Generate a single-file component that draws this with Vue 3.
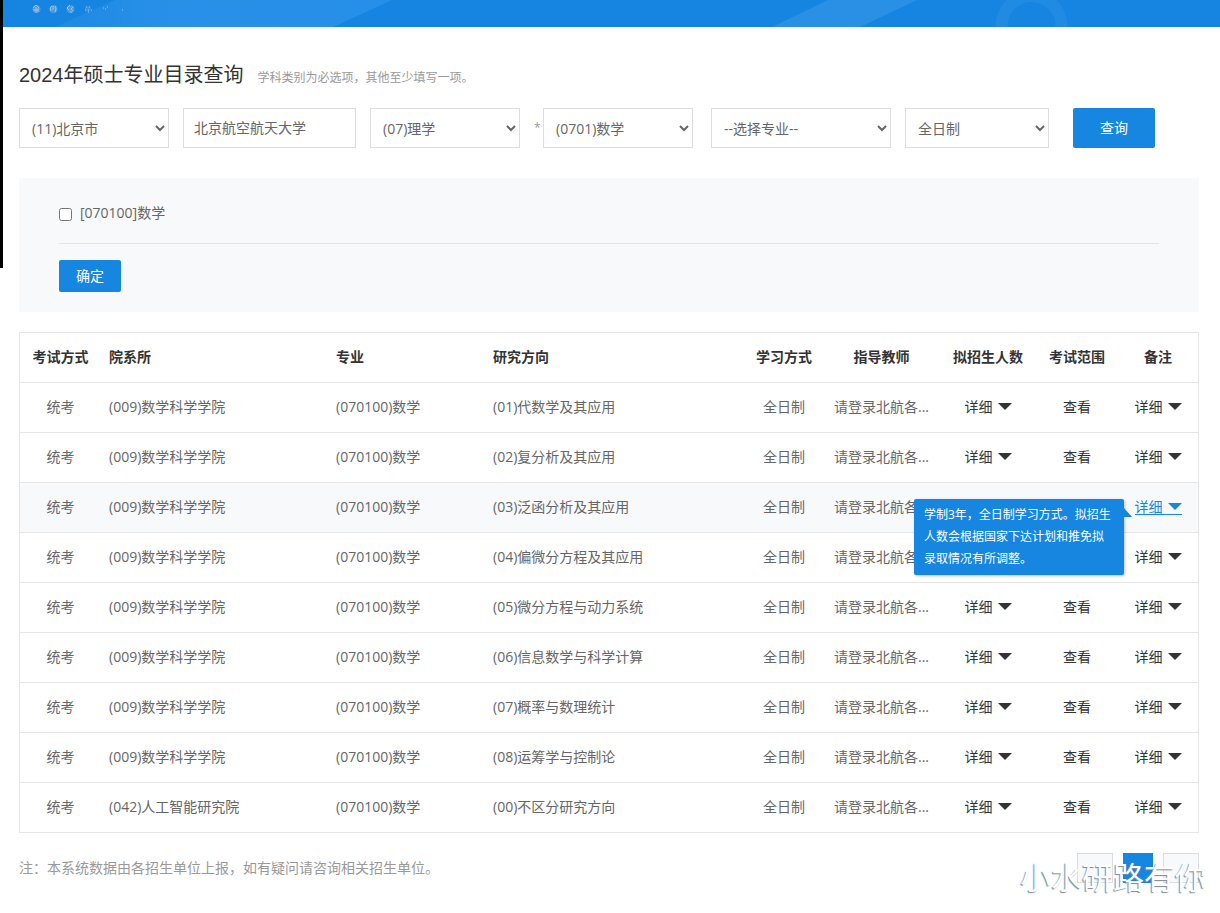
<script setup>
import { ref } from 'vue'

const province = ref('(11)北京市')
const school = ref('北京航空航天大学')
const category = ref('(07)理学')
const subject = ref('(0701)数学')
const major = ref('--选择专业--')
const mode = ref('全日制')
const picked = ref(false)

const math = '(009)数学科学学院'
const rows = [
  { dept: math, direction: '(01)代数学及其应用' },
  { dept: math, direction: '(02)复分析及其应用' },
  { dept: math, direction: '(03)泛函分析及其应用', active: true },
  { dept: math, direction: '(04)偏微分方程及其应用', covered: true },
  { dept: math, direction: '(05)微分方程与动力系统' },
  { dept: math, direction: '(06)信息数学与科学计算' },
  { dept: math, direction: '(07)概率与数理统计' },
  { dept: math, direction: '(08)运筹学与控制论' },
  { dept: '(042)人工智能研究院', direction: '(00)不区分研究方向' },
]
</script>

<template>
  <div class="page">
    <div class="edge"></div>
    <header class="banner">
      <svg class="shapes" width="1220" height="27" viewBox="0 0 1220 27" aria-hidden="true">
        <defs>
          <linearGradient id="ray" x1="0" x2="1">
            <stop offset="0" stop-color="#1d8ae4" />
            <stop offset="0.35" stop-color="#2990e8" />
            <stop offset="1" stop-color="#268fe7" />
          </linearGradient>
        </defs>
        <path d="M115 0H392L333 27H55Z" fill="url(#ray)" />
        <path d="M828 0H917L860 27H772Z" fill="#2990e6" />
        <circle cx="1031.500" cy="26" r="30" fill="none" stroke="#218be4" stroke-width="12" />
        <g fill="#4a9be6">
          <circle cx="36.500" cy="9" r="4" />
          <circle cx="53.500" cy="9" r="4" />
          <circle cx="70.500" cy="9" r="4" />
          <circle cx="88" cy="9" r="3" opacity="0.6" />
        </g>
        <g fill="none" stroke="#a9bfd6" stroke-width="1">
          <path d="M33 8l3-3 3 3M34 9v2M36 7v6M38 8v4M35 10h3" />
          <path d="M52 6l-2 2 1 3M55 6l1 3-1 3M53 6v4" />
          <path d="M70 5l-3 3 2 2M73 7l-2 2 2 2M70 12h2" />
          <path d="M86 7h1M89 7h1M85 10h1M88 10h1M91 10h1M88 12h1" />
          <path d="M103 8h1M105 9h1M107 7h1M122 10h1" />
        </g>
      </svg>
    </header>

    <main class="content">
      <div class="heading">
        <h1>2024年硕士专业目录查询</h1>
        <span>学科类别为必选项，其他至少填写一项。</span>
      </div>

      <form class="filters" @submit.prevent>
        <select v-model="province" class="field" aria-label="省市"><option>(11)北京市</option></select>
        <input v-model="school" class="field school" type="text" aria-label="招生单位" />
        <select v-model="category" class="field" aria-label="学科门类"><option>(07)理学</option></select>
        <span class="required">*</span>
        <select v-model="subject" class="field subject" aria-label="学科类别"><option>(0701)数学</option></select>
        <select v-model="major" class="field major" aria-label="专业"><option>--选择专业--</option></select>
        <select v-model="mode" class="field mode" aria-label="学习方式"><option>全日制</option></select>
        <button class="primary search" type="submit">查询</button>
      </form>

      <section class="panel">
        <div class="choices">
          <label><input v-model="picked" type="checkbox" />[070100]数学</label>
        </div>
        <button class="primary confirm" type="button">确定</button>
      </section>

      <table class="results">
        <colgroup>
          <col class="w-exam" /><col class="w-dept" /><col class="w-major" /><col />
          <col class="w-mode" /><col class="w-tutor" /><col class="w-quota" />
          <col class="w-scope" /><col class="w-note" />
        </colgroup>
        <thead>
          <tr>
            <th>考试方式</th>
            <th class="left">院系所</th>
            <th class="left">专业</th>
            <th class="left">研究方向</th>
            <th>学习方式</th>
            <th>指导教师</th>
            <th>拟招生人数</th>
            <th>考试范围</th>
            <th>备注</th>
          </tr>
        </thead>
        <tbody>
          <tr v-for="row in rows" :key="row.direction" :class="{ active: row.active, covered: row.covered }">
            <td>统考</td>
            <td class="left">{{ row.dept }}</td>
            <td class="left">(070100)数学</td>
            <td class="left">{{ row.direction }}</td>
            <td>全日制</td>
            <td>请登录北航各...</td>
            <td class="quota">
              <a class="more" href="#">详细<svg width="14" height="7" viewBox="0 0 14 7"><path d="M0 0H14L7 7Z" fill="currentColor" /></svg></a>
            </td>
            <td class="scope"><a href="#">查看</a></td>
            <td class="note">
              <a class="more" href="#">详细<svg width="14" height="7" viewBox="0 0 14 7"><path d="M0 0H14L7 7Z" fill="currentColor" /></svg></a>
              <div v-if="row.active" class="tip" role="tooltip">
                学制3年，全日制学习方式。拟招生人数会根据国家下达计划和推免拟录取情况有所调整。
                <svg class="tail" width="8" height="9" viewBox="0 0 8 9"><path d="M0 0L8 9H0Z" fill="#1686e1" /></svg>
              </div>
            </td>
          </tr>
        </tbody>
      </table>

      <footer class="footer">
        <p>注：本系统数据由各招生单位上报，如有疑问请咨询相关招生单位。</p>
        <nav class="pager" aria-label="分页">
          <button type="button" aria-label="上一页"></button>
          <button type="button" class="current" aria-label="第一页"></button>
          <button type="button" aria-label="下一页"></button>
          <span class="watermark">小水研路有你</span>
        </nav>
      </footer>
    </main>
  </div>
</template>

<style>
body {
  margin: 0;
  background: #fff;
}
</style>

<style scoped>
.page {
  position: relative;
  font: 14px/20px "Open Sans", "Noto Sans CJK SC", sans-serif;
  color: #666;
}
.page * {
  box-sizing: border-box;
}
.edge {
  position: absolute;
  left: 0;
  top: 0;
  width: 3px;
  height: 268px;
  background: #000;
}
.banner {
  height: 27px;
  margin-left: 3px;
  overflow: hidden;
  background: #1585e1;
}
.shapes {
  display: block;
  margin-left: -3px;
}
.content {
  padding: 33px 21px 30px 19px;
}
.heading {
  display: flex;
  align-items: baseline;
  gap: 14px;
  height: 48px;
}
h1 {
  margin: 0;
  font: 400 20px/30px "Liberation Sans", "Noto Sans CJK SC", sans-serif;
  color: #333;
}
.heading span {
  font-size: 12px;
  color: #999;
}
.filters {
  display: flex;
  align-items: center;
}
.field {
  width: 150px;
  height: 40px;
  margin: 0 14px 0 0;
  padding: 0 1px 0 8px;
  border: 1px solid #ddd;
  border-radius: 0;
  background: #fff;
  color: #666;
  font: inherit;
}
.school {
  width: 173px;
  padding: 0 10px 2px;
}
.required {
  width: 9px;
  font-size: 12px;
  color: #999;
}
.subject {
  margin-right: 18px;
}
.major {
  width: 180px;
}
.mode {
  width: 144px;
  margin-right: 24px;
}
.primary {
  padding: 0;
  border: 0;
  border-radius: 2px;
  background: #1686e1;
  color: #fff;
  font: inherit;
}
.search {
  width: 82px;
  height: 40px;
}
.panel {
  margin: 30px 0 20px;
  padding: 15px 40px 20px;
  background: #f8f9fb;
}
.choices {
  padding: 10px 0 20px;
  margin-bottom: 16px;
  border-bottom: 1px solid #e2e4e6;
}
.choices label {
  display: flex;
  align-items: center;
  gap: 8px;
}
.choices input {
  width: 13px;
  height: 13px;
  margin: 2px 0 0;
}
.confirm {
  display: block;
  width: 62px;
  height: 32px;
}
.results {
  width: 100%;
  table-layout: fixed;
  border: 1px solid #e6e6e6;
  border-bottom: 0;
  border-spacing: 0;
}
.w-exam { width: 81px; }
.w-dept { width: 227px; }
.w-major { width: 157px; }
.w-mode { width: 78px; }
.w-tutor { width: 117px; }
.w-quota { width: 96px; }
.w-scope { width: 82px; }
.w-note { width: 80px; }
th,
td {
  height: 50px;
  padding: 0 0 2px;
  border-bottom: 1px solid #e6e6e6;
  text-align: center;
  white-space: nowrap;
}
th {
  color: #333;
  font-weight: 700;
}
.left {
  padding-left: 8px;
  text-align: left;
}
.active td {
  background: #f8f9fb;
}
a {
  color: #333;
  text-decoration: none;
}
.more {
  display: inline-flex;
  align-items: center;
  gap: 5px;
  height: 14px;
  vertical-align: middle;
  border-bottom: 1px solid transparent;
}
.more svg {
  margin-bottom: 1px;
}
.note {
  position: relative;
}
.active .note .more {
  border-color: #1686e1;
  color: #1686e1;
}
/* Links under the open tooltip are not reachable while it is shown */
.active .quota a,
.active .scope a,
.covered .quota a,
.covered .scope a {
  visibility: hidden;
}
.tip {
  position: absolute;
  z-index: 1;
  top: 16px;
  right: 74px;
  width: 210px;
  padding: 5px 10px;
  border-radius: 2px;
  background: #1686e1;
  box-shadow: 1px 1px 3px rgba(0, 0, 0, 0.25);
  color: #fff;
  font-size: 12px;
  line-height: 22px;
  text-align: left;
  white-space: normal;
}
.tail {
  position: absolute;
  top: 9px;
  left: 100%;
}
.footer {
  display: flex;
  justify-content: space-between;
  align-items: center;
  margin-top: 20px;
}
.footer p {
  margin: 0;
  color: #999;
}
.pager {
  position: relative;
  display: flex;
  gap: 10px;
}
.pager button {
  width: 36px;
  height: 30px;
  padding: 0;
  border: 1px solid #ddd;
  background: #f8f9fb;
}
.pager .current {
  width: 30px;
  border: 0;
  background: #1686e1;
}
.watermark {
  position: absolute;
  top: 4px;
  right: -7px;
  font-size: 31px;
  line-height: 40px;
  color: #fff;
  text-shadow: -1px 1px 1px #7d8893;
  white-space: nowrap;
}
</style>
